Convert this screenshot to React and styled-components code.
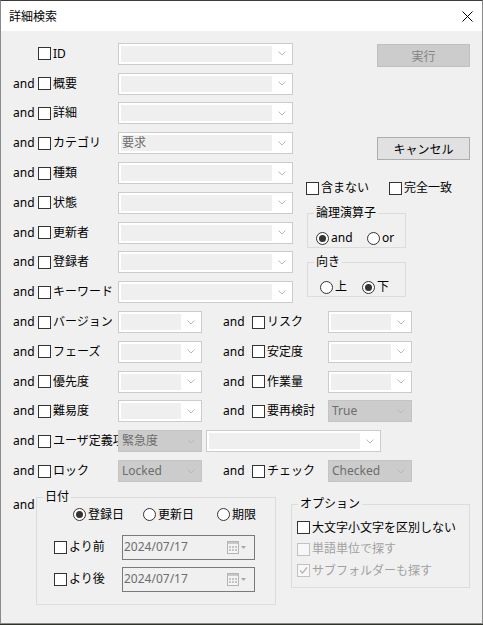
import React from "react";
import styled, { createGlobalStyle } from "styled-components";

const Global = createGlobalStyle`
  html, body { margin: 0; padding: 0; background: #2f3326; }
  body {
    font-family: "Noto Sans", "Noto Sans CJK JP", sans-serif;
    font-size: 12px;
    color: #000;
  }
  #root { width: 483px; }
`;

const Window = styled.div`
  width: 483px;
  height: 624px;
  box-sizing: border-box;
  border: 1px solid #8a8a8a;
  border-top-color: #3b3b3b;
  background: #f0f0f0;
  display: flex;
  flex-direction: column;
`;

const TitleBar = styled.div`
  height: 30px;
  flex-shrink: 0;
  background: #fff;
  display: flex;
  align-items: center;
  justify-content: space-between;
  padding: 0 9px 0 8px;
`;

const Title = styled.span`
  font-family: "Noto Sans CJK JP", sans-serif;
  font-size: 12px;
  line-height: 16px;
`;

const Body = styled.div`
  padding: 8px 0 0 12px;
  display: flex;
  flex-direction: column;
`;

const Top = styled.div`
  display: flex;
  align-items: flex-start;
`;

const Rows = styled.div`
  display: grid;
  grid-template-columns: 25px 80px 175px;
  grid-auto-rows: 29.8px;
  align-items: center;
`;

const Lower = styled.div`
  display: grid;
  grid-template-columns: 25px 80px 84px 21px 29px 76px 84px;
  grid-auto-rows: 29.8px;
  align-items: center;
`;

const AndText = styled.span`
  line-height: 16px;
  white-space: nowrap;
  grid-column: ${(p) => p.$col || "auto"};
`;

const CheckLabel = styled.label`
  display: flex;
  align-items: center;
  gap: 2px;
  line-height: 16px;
  white-space: nowrap;
  overflow: hidden;
  color: ${(p) => (p.$disabled ? "#a0a0a0" : "#000")};
  width: ${(p) => (p.$w ? `${p.$w}px` : "auto")};
  grid-column: ${(p) => p.$col || "auto"};
`;

const Box = styled.span`
  width: 13px;
  height: 13px;
  box-sizing: border-box;
  flex-shrink: 0;
  border: 1px solid ${(p) => (p.$disabled ? "#c2c2c2" : "#333")};
  background: ${(p) => (p.$disabled ? "#f7f7f7" : "#fff")};
  display: flex;
  align-items: center;
  justify-content: center;
`;

const RadioLabel = styled.label`
  display: flex;
  align-items: center;
  gap: 2px;
  line-height: 16px;
  white-space: nowrap;
  width: ${(p) => (p.$w ? `${p.$w}px` : "auto")};
`;

const Circle = styled.span`
  width: 13px;
  height: 13px;
  box-sizing: border-box;
  border-radius: 50%;
  border: 1px solid #333;
  background: #fff;
  flex-shrink: 0;
  display: flex;
  align-items: center;
  justify-content: center;
  &::after {
    content: "";
    width: 7px;
    height: 7px;
    border-radius: 50%;
    background: #333;
    display: ${(p) => (p.$checked ? "block" : "none")};
  }
`;

const ComboBox = styled.div`
  width: ${(p) => p.$w}px;
  height: 22px;
  box-sizing: border-box;
  border: 1px solid ${(p) => (p.$disabled ? "#c4c4c4" : "#cccccc")};
  background: ${(p) => (p.$disabled ? "#cccccc" : "#fff")};
  display: flex;
  align-items: stretch;
  padding: 2px 0 2px 2px;
  grid-column: ${(p) => p.$col || "auto"};
  margin-left: ${(p) => p.$ml || 0}px;
  justify-self: start;
`;

const ComboField = styled.div`
  flex: 1;
  background: ${(p) => (p.$disabled ? "transparent" : "#efefef")};
  color: #6d6d6d;
  line-height: 16px;
  padding-left: 1px;
  overflow: hidden;
  white-space: nowrap;
`;

const ComboArrow = styled.div`
  width: 20px;
  display: flex;
  align-items: center;
  justify-content: center;
`;

const Side = styled.div`
  margin-left: 13px;
  display: flex;
  flex-direction: column;
  align-items: flex-start;
`;

const Button = styled.button`
  width: 93px;
  height: 23px;
  box-sizing: border-box;
  margin: ${(p) => p.$mt}px 0 0 71px;
  padding: 0;
  font-family: "Noto Sans CJK JP", sans-serif;
  font-size: 12px;
  border: 1px solid ${(p) => (p.disabled ? "#bfbfbf" : "#adadad")};
  background: ${(p) => (p.disabled ? "#cccccc" : "#e1e1e1")};
  color: ${(p) => (p.disabled ? "#838383" : "#000")};
`;

const CheckPair = styled.div`
  margin-top: 20px;
  display: grid;
  grid-template-columns: 83px auto;
  height: 16px;
  align-items: center;
`;

const GroupBox = styled.div`
  position: relative;
  box-sizing: border-box;
  border: 1px solid #dcdcdc;
  width: ${(p) => p.$w}px;
  height: ${(p) => p.$h}px;
  margin-top: ${(p) => p.$mt || 0}px;
  margin-left: ${(p) => p.$ml || 0}px;
  flex-shrink: 0;
`;

const GroupTitle = styled.span`
  position: absolute;
  top: -9px;
  left: 6px;
  padding: 0 2px;
  background: #f0f0f0;
  line-height: 16px;
  white-space: nowrap;
`;

const RadioRow = styled.div`
  display: flex;
  align-items: center;
  height: 16px;
  padding: ${(p) => p.$pad};
`;

const Bottom = styled.div`
  display: flex;
  align-items: flex-start;
`;

const BottomAnd = styled.span`
  width: 23px;
  margin-top: 11px;
  line-height: 16px;
`;

const DateInner = styled.div`
  padding: 9px 0 0 0;
  display: flex;
  flex-direction: column;
`;

const PickerRow = styled.div`
  display: flex;
  align-items: center;
  margin-top: ${(p) => p.$mt}px;
  padding-left: 17px;
`;

const Picker = styled.div`
  width: 133px;
  height: 25px;
  box-sizing: border-box;
  border: 1px solid #7a7a7a;
  background: #f0f0f0;
  display: flex;
  align-items: center;
  padding: 0 7px 0 1px;
  color: #6d6d6d;
  line-height: 16px;
`;

const PickerText = styled.span`
  flex: 1;
`;

const OptionList = styled.div`
  padding: 12px 0 0 5px;
  display: grid;
  grid-auto-rows: 21.5px;
  align-items: center;
`;

const Chevron = () => (
  <svg width="8" height="5" viewBox="0 0 8 5">
    <polyline points="0.5,0.5 4,4 7.5,0.5" fill="none" stroke="#b8b8b8" strokeWidth="1" />
  </svg>
);

const Combo = ({ w, value, disabled, col, ml }) => (
  <ComboBox $w={w} $disabled={disabled} $col={col} $ml={ml}>
    <ComboField $disabled={disabled}>{value}</ComboField>
    <ComboArrow>
      <Chevron />
    </ComboArrow>
  </ComboBox>
);

const Check = ({ label, disabled, checked, w, col }) => (
  <CheckLabel $disabled={disabled} $w={w} $col={col}>
    <Box $disabled={disabled}>
      {checked && (
        <svg width="9" height="9" viewBox="0 0 9 9">
          <path d="M1 4.5 L3.5 7 L8 1.5" fill="none" stroke="#b5b5b5" strokeWidth="1.3" />
        </svg>
      )}
    </Box>
    {label}
  </CheckLabel>
);

const Radio = ({ label, checked, w }) => (
  <RadioLabel $w={w}>
    <Circle $checked={checked} />
    {label}
  </RadioLabel>
);

const CalendarIcon = () => (
  <svg width="20" height="13" viewBox="0 0 20 13">
    <rect x="0.5" y="0.5" width="11" height="12" fill="#f4f4f4" stroke="#b4b4b4" />
    <rect x="1" y="1" width="10" height="2" fill="#c8c8c8" />
    <g fill="#c4c4c4">
      <rect x="2" y="5" width="2" height="2" />
      <rect x="5" y="5" width="2" height="2" />
      <rect x="8" y="5" width="2" height="2" />
      <rect x="2" y="8" width="2" height="2" />
      <rect x="5" y="8" width="2" height="2" />
      <rect x="8" y="8" width="2" height="2" />
    </g>
    <polygon points="14,5 19,5 16.5,8" fill="#a8a8a8" />
  </svg>
);

const CloseIcon = () => (
  <svg width="11" height="11" viewBox="0 0 11 11">
    <path d="M0.5 0.5 L10.5 10.5 M10.5 0.5 L0.5 10.5" stroke="#000" strokeWidth="1" />
  </svg>
);

const topRows = [
  { label: "ID", and: false },
  { label: "概要" },
  { label: "詳細" },
  { label: "カテゴリ", value: "要求" },
  { label: "種類" },
  { label: "状態" },
  { label: "更新者" },
  { label: "登録者" },
  { label: "キーワード" },
];

const lowerPairs = [
  ["バージョン", "リスク", null],
  ["フェーズ", "安定度", null],
  ["優先度", "作業量", null],
  ["難易度", "要再検討", "True"],
];

export default function App() {
  return (
    <>
      <Global />
      <Window>
        <TitleBar>
          <Title>詳細検索</Title>
          <CloseIcon />
        </TitleBar>
        <Body>
          <Top>
            <Rows>
              {topRows.map((r) => (
                <React.Fragment key={r.label}>
                  <AndText>{r.and === false ? "" : "and"}</AndText>
                  <Check label={r.label} />
                  <Combo w={175} value={r.value} />
                </React.Fragment>
              ))}
            </Rows>
            <Side>
              <Button disabled $mt={5}>実行</Button>
              <Button $mt={70}>キャンセル</Button>
              <CheckPair>
                <Check label="含まない" />
                <Check label="完全一致" />
              </CheckPair>
              <GroupBox $w={99} $h={35} $mt={17} $ml={1}>
                <GroupTitle>論理演算子</GroupTitle>
                <RadioRow $pad="16px 0 0 8px">
                  <Radio label="and" checked w={51} />
                  <Radio label="or" />
                </RadioRow>
              </GroupBox>
              <GroupBox $w={99} $h={35} $mt={14} $ml={1}>
                <GroupTitle>向き</GroupTitle>
                <RadioRow $pad="16px 0 0 12px">
                  <Radio label="上" w={42} />
                  <Radio label="下" checked />
                </RadioRow>
              </GroupBox>
            </Side>
          </Top>

          <Lower>
            {lowerPairs.map(([a, b, v]) => (
              <React.Fragment key={a}>
                <AndText>and</AndText>
                <Check label={a} />
                <Combo w={84} />
                <AndText $col="5">and</AndText>
                <Check label={b} />
                <Combo w={84} value={v} disabled={!!v} />
              </React.Fragment>
            ))}
            <AndText>and</AndText>
            <Check label="ユーザ定義項目" w={80} />
            <Combo w={84} value="緊急度" disabled />
            <Combo w={175} col="4 / 8" ml={4} />
            <AndText>and</AndText>
            <Check label="ロック" />
            <Combo w={84} value="Locked" disabled />
            <AndText $col="5">and</AndText>
            <Check label="チェック" />
            <Combo w={84} value="Checked" disabled />
          </Lower>

          <Bottom>
            <BottomAnd>and</BottomAnd>
            <GroupBox $w={240} $h={108} $mt={11}>
              <GroupTitle>日付</GroupTitle>
              <DateInner>
                <RadioRow $pad="0 0 0 36px">
                  <Radio label="登録日" checked w={70} />
                  <Radio label="更新日" w={74} />
                  <Radio label="期限" />
                </RadioRow>
                <PickerRow $mt={12}>
                  <Check label="より前" w={68} />
                  <Picker>
                    <PickerText>2024/07/17</PickerText>
                    <CalendarIcon />
                  </Picker>
                </PickerRow>
                <PickerRow $mt={7}>
                  <Check label="より後" w={68} />
                  <Picker>
                    <PickerText>2024/07/17</PickerText>
                    <CalendarIcon />
                  </Picker>
                </PickerRow>
              </DateInner>
            </GroupBox>
            <GroupBox $w={179} $h={84} $mt={18} $ml={15}>
              <GroupTitle>オプション</GroupTitle>
              <OptionList>
                <Check label="大文字小文字を区別しない" />
                <Check label="単語単位で探す" disabled />
                <Check label="サブフォルダーも探す" disabled checked />
              </OptionList>
            </GroupBox>
          </Bottom>
        </Body>
      </Window>
    </>
  );
}
